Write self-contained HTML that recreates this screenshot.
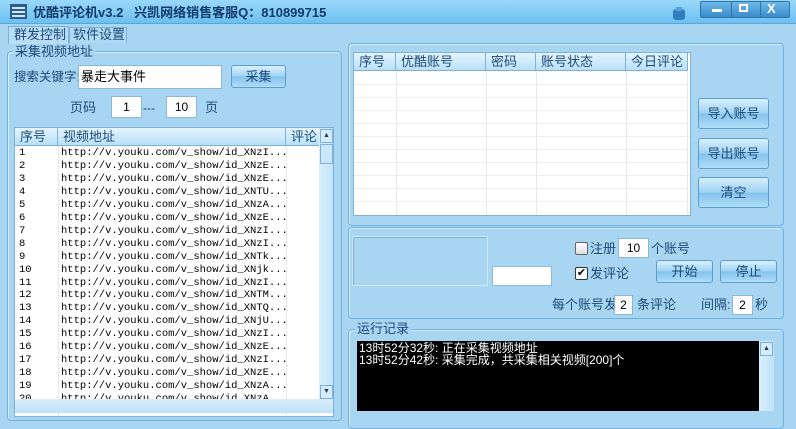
<!DOCTYPE html>
<html><head><meta charset="utf-8"><style>
*{margin:0;padding:0;box-sizing:border-box}
body{width:796px;height:409px;overflow:hidden;background:#a8d5f2;font-family:"Liberation Sans","Noto Sans CJK SC","WenQuanYi Zen Hei",sans-serif;font-size:12px;color:#1a3a5a;position:relative;line-height:15px}
.a{position:absolute}
.title{left:0;top:0;width:796px;height:24px;background:linear-gradient(#9ad8fb,#6cc0f0);border-bottom:1px solid #5aa6d8}
.grp{position:absolute;border:1px solid #6fb2e0;border-radius:4px;box-shadow:inset 1px 1px 0 #d6eefc}
.lbl{position:absolute;background:#a8d5f2;padding:0 2px;font-size:13px;color:#1c4a78}
.btn{position:absolute;border:1px solid #5b9fd0;border-radius:3px;background:linear-gradient(#d8f0ff,#9fd2f3 50%,#84c3ee 51%,#b0dcf6);text-align:center;font-size:13px;color:#1c4a78}
.inp{position:absolute;background:#fff;border:1px solid #8cb8d8;text-align:center;font-size:12px;color:#000}
.list{position:absolute;background:#fff;border:1px solid #7fb0d6;overflow:hidden}
.hdr{position:absolute;top:0;height:18px;background:linear-gradient(#e4f4fe,#b8e0f8);border-right:1px solid #7fb0d6;border-bottom:1px solid #7fb0d6;font-size:13px;padding-left:5px;line-height:17px;color:#1c4a78}
.row{position:absolute;left:0;height:13px;font-family:"Liberation Mono",monospace;font-size:10.5px;color:#000;line-height:13px;white-space:pre}
.sb{position:absolute;background:linear-gradient(90deg,#d9eefc,#bfe2f8);z-index:2}
.vl{position:absolute;top:18px;bottom:0;width:1px;background:#e8e8e8}
.hl{position:absolute;left:0;right:0;height:1px;background:#eeeeee}
.z{z-index:3}
</style></head><body>
<div class="a title"></div>
<svg class="a" style="left:10px;top:4px" width="18" height="16"><rect x="0" y="0" width="17" height="15" fill="#2c5d8c"/><path d="M2 4h13M2 8h13M2 12h13" stroke="#cfe8fb" stroke-width="2"/></svg>
<div class="a" style="left:33px;top:5px;font-weight:bold;font-size:13px;color:#123a66">优酷评论机v3.2&nbsp;&nbsp;&nbsp;兴凯网络销售客服Q：810899715</div>
<svg class="a" style="left:672px;top:6px" width="14" height="15"><rect x="1" y="3" width="12" height="11" rx="3" fill="#2f7fc0"/><rect x="4" y="1" width="6" height="4" fill="#5aa0d8"/></svg>
<div class="a" style="left:700px;top:1px;width:90px;height:17px;background:linear-gradient(#6eb8e8,#3b8ccc);border:1px solid #2e74aa;border-radius:2px"></div>
<div class="a" style="left:712px;top:9px;width:10px;height:3px;background:#fff"></div>
<div class="a" style="left:739px;top:4px;width:9px;height:8px;border:2px solid #fff"></div>
<div class="a" style="left:767px;top:1px;color:#fff;font-weight:bold;font-size:13px">X</div>
<div class="a" style="left:731px;top:2px;width:1px;height:15px;background:#2e74aa"></div>
<div class="a" style="left:760px;top:2px;width:1px;height:15px;background:#2e74aa"></div>
<!-- tabs -->
<div class="a" style="left:8px;top:26px;width:61px;height:18px;background:#b8def6;border:1px solid #7fb0d6;border-bottom:none;font-size:13px;padding-left:5px;line-height:16px;color:#1c4a78">群发控制</div>
<div class="a" style="left:69px;top:27px;width:58px;height:16px;background:#b0daf4;border:1px solid #7fb0d6;border-bottom:none;font-size:13px;padding-left:3px;line-height:14px;color:#1c4a78">软件设置</div>
<!-- left group -->
<div class="grp" style="left:7px;top:51px;width:335px;height:370px"></div>
<div class="lbl" style="left:13px;top:44px">采集视频地址</div>
<div class="a" style="left:14px;top:70px;font-size:12.5px;color:#1c4a78;white-space:nowrap">搜索关键字:</div>
<div class="inp" style="left:78px;top:65px;width:144px;height:24px;text-align:left;font-size:13px;padding:3px 2px">暴走大事件</div>
<div class="btn" style="left:231px;top:65px;width:55px;height:23px;line-height:21px">采集</div>
<div class="a" style="left:70px;top:100px;font-size:13px;color:#1c4a78">页码</div>
<div class="inp" style="left:111px;top:96px;width:31px;height:22px;line-height:20px">1</div>
<div class="a" style="left:143px;top:101px;font-size:12px">---</div>
<div class="inp" style="left:166px;top:96px;width:31px;height:22px;line-height:20px">10</div>
<div class="a" style="left:205px;top:100px;font-size:13px;color:#1c4a78">页</div>
<div class="list" style="left:14px;top:127px;width:320px;height:290px">
<div class="hdr" style="left:0;width:43px">序号</div>
<div class="hdr" style="left:43px;width:228px">视频地址</div>
<div class="hdr" style="left:271px;width:34px">评论</div>
<div class="vl" style="left:43px"></div><div class="vl" style="left:271px"></div>
<div class="sb" style="left:304px;top:0;width:15px;height:272px"></div>
<div class="a z" style="left:305px;top:1px;width:13px;height:14px;background:#d4ecfc;border:1px solid #7fb0d6;font-size:7px;text-align:center;line-height:12px">▲</div>
<div class="a z" style="left:305px;top:16px;width:13px;height:20px;background:#cbe7fa;border:1px solid #7fb0d6"></div>
<div class="a z" style="left:305px;top:257px;width:13px;height:14px;background:#d4ecfc;border:1px solid #7fb0d6;font-size:7px;text-align:center;line-height:12px">▼</div>
<div class="sb" style="left:0;top:271px;width:320px;height:14px;background:linear-gradient(#d9eefc,#bfe2f8)"></div>
<div id="rows"></div>
</div>
<!-- right top -->
<div class="grp" style="left:348px;top:43px;width:436px;height:183px"></div>
<div class="list" style="left:353px;top:52px;width:338px;height:164px">
<div class="hdr" style="left:0;width:42px">序号</div>
<div class="hdr" style="left:42px;width:90px">优酷账号</div>
<div class="hdr" style="left:132px;width:50px">密码</div>
<div class="hdr" style="left:182px;width:90px">账号状态</div>
<div class="hdr" style="left:272px;width:62px">今日评论</div>
<div class="vl" style="left:42px"></div><div class="vl" style="left:132px"></div><div class="vl" style="left:182px"></div><div class="vl" style="left:272px"></div><div class="vl" style="left:333px"></div>
<div class="hl" style="top:31px"></div><div class="hl" style="top:44px"></div><div class="hl" style="top:57px"></div><div class="hl" style="top:70px"></div><div class="hl" style="top:83px"></div><div class="hl" style="top:96px"></div><div class="hl" style="top:109px"></div><div class="hl" style="top:122px"></div><div class="hl" style="top:135px"></div><div class="hl" style="top:148px"></div>
</div>
<div class="btn" style="left:698px;top:98px;width:71px;height:31px;line-height:29px">导入账号</div>
<div class="btn" style="left:698px;top:138px;width:71px;height:31px;line-height:29px">导出账号</div>
<div class="btn" style="left:698px;top:177px;width:71px;height:31px;line-height:29px">清空</div>
<!-- right mid -->
<div class="grp" style="left:348px;top:227px;width:436px;height:92px"></div>
<div class="a" style="left:352px;top:236px;width:136px;height:50px;border:1px solid #d0e8f8;box-shadow:inset 1px 1px 0 #7fb0d6;background:#a8d5f2"></div>
<div class="inp" style="left:492px;top:266px;width:60px;height:20px"></div>
<div class="a" style="left:575px;top:242px;width:13px;height:13px;background:linear-gradient(#fff,#ddd);border:1px solid #666;border-radius:2px"></div>
<div class="a" style="left:590px;top:241px;font-size:13px;color:#1c4a78">注册</div>
<div class="inp" style="left:618px;top:238px;width:31px;height:20px;line-height:18px">10</div>
<div class="a" style="left:651px;top:241px;font-size:13px;color:#1c4a78">个账号</div>
<div class="a" style="left:575px;top:267px;width:13px;height:13px;background:#fff;border:1px solid #333;border-radius:2px;font-size:11px;line-height:11px;text-align:center;color:#000">✔</div>
<div class="a" style="left:590px;top:266px;font-size:13px;color:#1c4a78">发评论</div>
<div class="btn" style="left:656px;top:260px;width:57px;height:23px;line-height:21px">开始</div>
<div class="btn" style="left:720px;top:260px;width:57px;height:23px;line-height:21px">停止</div>
<div class="a" style="left:552px;top:297px;font-size:13px;color:#1c4a78">每个账号发</div>
<div class="inp" style="left:614px;top:295px;width:19px;height:20px;line-height:18px">2</div>
<div class="a" style="left:637px;top:297px;font-size:13px;color:#1c4a78">条评论</div>
<div class="a" style="left:701px;top:297px;font-size:13px;color:#1c4a78">间隔:</div>
<div class="inp" style="left:732px;top:295px;width:21px;height:20px;line-height:18px">2</div>
<div class="a" style="left:755px;top:297px;font-size:13px;color:#1c4a78">秒</div>
<!-- log -->
<div class="grp" style="left:348px;top:329px;width:436px;height:100px"></div>
<div class="lbl" style="left:355px;top:321px">运行记录</div>
<div class="a" style="left:357px;top:341px;width:402px;height:70px;background:#000;color:#fff;font-size:12px;line-height:12px;padding:1px 2px;font-family:'Liberation Sans','Noto Sans CJK SC',sans-serif">13时52分32秒: 正在采集视频地址<br>13时52分42秒: 采集完成，共采集相关视频[200]个</div>
<div class="sb" style="left:759px;top:341px;width:15px;height:70px"></div>
<div class="a z" style="left:760px;top:342px;width:13px;height:14px;background:#d4ecfc;border:1px solid #7fb0d6;font-size:7px;text-align:center;line-height:12px">▲</div>
<script>
var ids=["XNzI","XNzE","XNzE","XNTU","XNzA","XNzE","XNzI","XNzI","XNTk","XNjk","XNzI","XNTM","XNTQ","XNjU","XNzI","XNzE","XNzI","XNzE","XNzA","XNzA"];
var h="";for(var i=0;i<20;i++){var t=19+i*12.95;h+='<div class="row" style="top:'+t+'px;left:4px">'+(i+1)+'</div><div class="row" style="top:'+t+'px;left:46px">http://v.youku.com/v_show/id_'+ids[i]+'...</div>';}
document.getElementById("rows").innerHTML=h;
</script>
</body></html>
